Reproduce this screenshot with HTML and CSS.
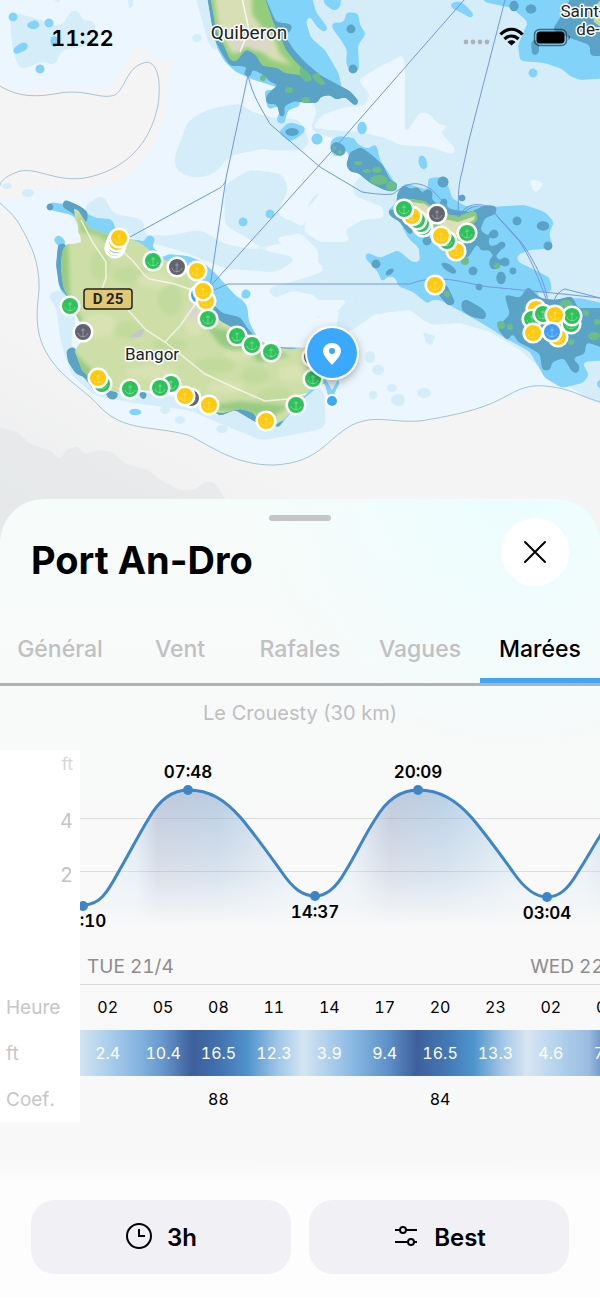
FILE: index.html
```html
<!DOCTYPE html>
<html lang="fr">
<head>
  <meta charset="UTF-8">
  <meta name="viewport" content="width=device-width, initial-scale=1.0">
  <title>Port An-Dro</title>
  <link rel="stylesheet" href="styles.css">
</head>
<body>
  <div class="map">
    <svg class="map_canvas" viewBox="0 0 600 540" role="img" aria-label="Port An-Dro">
      <defs>
        <linearGradient id="deep" x1="0" y1="1" x2="1" y2="0">
          <stop offset="0" stop-color="#ebecee"/>
          <stop offset=".35" stop-color="#f4f4f4"/>
          <stop offset="1" stop-color="#f4f4f4"/>
        </linearGradient>
        <filter id="soft" x="-20%" y="-20%" width="140%" height="140%"><feGaussianBlur stdDeviation="2"/></filter>
        <!-- rounds the corners of the coastlines -->
        <filter id="round" filterUnits="userSpaceOnUse" x="-20" y="-20" width="640" height="580" color-interpolation-filters="sRGB">
          <feGaussianBlur stdDeviation="2"/>
          <feColorMatrix values="1 0 0 0 0  0 1 0 0 0  0 0 1 0 0  0 0 0 7 -3"/>
        </filter>
        <filter id="round_big" filterUnits="userSpaceOnUse" x="-20" y="-20" width="640" height="580" color-interpolation-filters="sRGB">
          <feGaussianBlur stdDeviation="4"/>
          <feColorMatrix values="1 0 0 0 0  0 1 0 0 0  0 0 1 0 0  0 0 0 12 -5"/>
        </filter>
        <filter id="shadow" x="-50%" y="-50%" width="200%" height="200%"><feDropShadow dx="0" dy="3" stdDeviation="4" flood-opacity=".3"/></filter>
        <g id="spot">
          <circle r="9.300" stroke="#fff" stroke-width="2.600"/>
          <path d="M0-4V5M-2-2H2M-5 1C-4 6 4 6 5 1" fill="none" stroke="#fff" stroke-opacity=".3"/>
        </g>
        <clipPath id="island">
          <path d="M74 209Q78 209 80 213L85 221Q88 228 92 229L98 231L110 235Q120 234 127 237L142 244Q148 249 154 254Q162 260 168 261Q178 262 186 265Q196 272 202 281Q209 290 210 296L213 311Q216 318 222 322L239 331Q250 334 261 341Q270 346 278 348L293 349L311 347L321 343L324 363Q324 371 320 377Q316 385 310 390L299 402Q292 412 285 418Q277 425 270 425Q264 426 260 422L253 413Q247 410 240 409L223 413L212 412Q203 408 196 403Q188 396 182 395L164 393L143 390L115 392Q108 390 103 388L96 383Q88 377 82 370L75 352Q76 346 83 341L80 322Q74 312 71 300Q64 292 63 284Q60 268 62 254Q63 247 68 244Q76 244 81 242Q81 236 78 232Q79 225 75 219Z"/>
        </clipPath>
      </defs>

      <rect width="600" height="540" fill="#ebf6fe"/>

      <!-- deep water -->
      <path d="M-10 200C8 212 13 215 18 222C28 240 40 258 39 290C37 310 34 330 46 352C62 380 84 388 100 407C125 432 150 425 188 435C210 445 235 466 275 465C320 462 325 440 352 425C376 414 390 423 420 421C450 416 470 412 490 404C510 396 520 384 545 386C570 388 580 396 600 402V540H-10Z" fill="url(#deep)"/>
      <g filter="url(#round_big)">
        <path d="M-10 78L22 90L48 90L80 87L108 91L124 70L133 50L145 45L150 60L175 62L166 85L165 115L153 145L135 170L118 182L70 191L40 187L18 200L-10 196Z" fill="#f4f4f4"/>
      </g>
      <path filter="url(#round)" d="M-10 425L18 432L30 444L50 450L60 460L66 450L78 446L84 454L100 450L112 452L126 464L148 470L160 480L180 490L195 490L204 482L214 482L226 500L240 540H-10Z" fill="#e2e5e7" opacity=".55"/>

      <!-- medium water -->
      <g fill="#d5edf9" filter="url(#round_big)">
        <path d="M286-10H610V407L560 388L530 370L505 350L470 332L440 328L420 318L395 322L378 311L366 320L352 330L335 336L340 310L357 292L345 298L327 316L300 320L282 300L262 290L300 280L330 270L300 250L310 200L330 185L350 190L375 160L340 140L310 130L318 110L290 60Z"/>
        <path d="M10 12L40 20L62 28L70 12L80 8V22L97 20L90 45L60 50L55 68L45 60L20 70L13 50Z"/>
        <path d="M186 125C200 108 225 106 245 104C244 125 268 138 268 146C250 154 225 150 222 166C208 180 190 180 177 170C170 155 184 142 186 125Z"/>
        <path d="M194-10L209 44L222 62L214 30L205-10Z"/>
        <path d="M225 185L250 170L282 174L288 190L275 215L300 225L300 240L262 246L225 225Z"/>
        <path d="M82 208L103 194L112 214L145 220L142 235L170 236L200 230L226 245L300 258L275 272L225 268L180 250L110 232Z"/>
        <path d="M52 232L62 290L45 294L56 305L62 345L72 375L95 395L130 402L190 410L225 425L262 440L305 432L325 428L324 390L310 385L285 410L220 405L100 385L70 345L75 320L55 270Z"/>
        <path d="M246 110L270 118L300 120L310 145L300 150L268 150L250 130Z"/>
      </g>
      <g fill="#d5edf9">
        <ellipse cx="28" cy="193" rx="6" ry="4"/><ellipse cx="7" cy="186" rx="5" ry="3"/><ellipse cx="197" cy="38" rx="5" ry="4"/><path d="M128-2h5v8l-4 3zM52-2h10l-4 5z"/>
      </g>

      <!-- pale holes -->
      <g fill="#ebf6fe" filter="url(#round)">
        <path d="M358 80L382 65L390 62L403 54L405 66V135L420 112L430 114L438 124L450 126L440 132L455 148L454 155L430 147L400 145L385 138L360 132L330 130L312 128L322 115L345 107L364 106L370 95Z"/>
        <path d="M300 190L325 183L352 184L355 196L383 207L384 218L362 220L345 230L350 242L320 242L304 232L306 210L323 190L300 198Z"/>
        <path d="M268 301L292 291L315 295L318 320L300 325L272 310Z"/>
        <path d="M275 238L300 233L318 250L318 270L300 260Z"/>
        <path d="M357 290L325 325L312 300L345 300Z"/>
        <path d="M382 313L410 310L430 325L460 323L490 332L520 350L550 378L600 402L545 386L500 400L450 416L380 420L350 400L368 330Z"/>
        <path d="M528 178L545 183L535 194Z"/>
      </g>
      <g fill="#d5edf9">
        <ellipse cx="370" cy="357" rx="5" ry="6"/><ellipse cx="378" cy="370" rx="6" ry="5"/><ellipse cx="392" cy="388" rx="5" ry="4"/>
        <ellipse cx="398" cy="400" rx="7" ry="6"/><ellipse cx="373" cy="395" rx="4" ry="4"/><ellipse cx="424" cy="393" rx="7" ry="5"/><path d="M423 332l12 4-3 9-6-2z"/>
        <ellipse cx="165" cy="410" rx="5" ry="4"/><ellipse cx="180" cy="420" rx="5" ry="4"/><ellipse cx="222" cy="429" rx="6" ry="4"/>
      </g>

      <!-- shallow water -->
      <g fill="#82d3fa" filter="url(#round)">
        <circle cx="13" cy="17" r="5"/><circle cx="49" cy="23" r="5"/><circle cx="40" cy="69" r="5"/>
        <path d="M24 25L36 19L41 26L33 30ZM12 50L20 43L28 42L28 49L15 55ZM50 36h8v11h-7z"/>
        <path d="M206-10L217 48L225 62L236 72L254 80L280 88L300 70L240-10Z"/>
        <path d="M255-10H310L316 12L328 28L325 33L317 27L309 15L306 22L311 38L325 50L338 72L342 88L320 90L290 70Z"/>
        <path d="M323-10H342L340 8L334 11L324 4ZM345 20L346 12L358 13L360 25L366 34L358 45L359 70L352 74L346 64L347 50L341 40L332 28V22L341 23Z"/>
        <path d="M264 90L268 110L278 106L283 110L277 116L277 123L284 124L288 110L300 106L300 90ZM278 132L290 122L306 127L299 137L289 142Z"/>
        <path d="M450 3L460 1L466 6L474 14L472 19L462 13L451 8Z"/>
        <path d="M480-10H610V78L580 80L570 76L562 69L545 63L520 61L518 45L528 22L512 8L484 2Z"/>
        <circle cx="533" cy="73" r="5"/><ellipse cx="362" cy="128" rx="5" ry="7"/><circle cx="317" cy="139" r="6"/><circle cx="301" cy="130" r="4"/>
        <path d="M331 140L338 136L355 138L357 144L368 149L376 143L380 160L392 178L398 190L388 192L350 158L345 148L336 158L330 150Z"/>
        <path d="M420 153L426 158L428 168L422 170L418 163Z"/>
        <path d="M398 193L405 183L428 190L428 178L441 177L448 185L452 198L465 206L490 207L525 205L545 212L554 222L549 234L553 246L544 249L530 250L517 255L518 262L535 270L550 278L552 292L533 292L545 300L580 298L610 305V360L582 362L589 375L583 383L562 388L545 378L530 352L518 345L505 338L485 325L462 312L440 300L430 300L429 305L413 292L398 286L396 278L388 276L382 283L378 272L365 258L366 252L380 258L398 250L412 262L420 262L419 248L408 238L400 222L390 216L388 210L395 204Z"/>
        <path d="M72 215L46 209L50 202L64 204L72 202L84 212L96 218L112 219L116 230L110 238L140 240L152 246L163 258L168 254L188 256L203 262L216 274L235 295L247 305L249 322L262 346L310 348L325 352L326 380L300 402L285 420L272 420L300 370L200 310L90 235Z"/>
        <path d="M53 240L58 234L66 241L62 250ZM56 250L60 290L80 310L75 345L88 375L72 345L82 330Z"/>
        <path d="M129 409h11l3 4-3 2h-11z"/><circle cx="150" cy="240" r="5"/><circle cx="243" cy="222" r="5"/><circle cx="270" cy="214" r="5"/><circle cx="246" cy="294" r="5"/>
        <path d="M324 380L341 380L335 392L332 406L328 396Z"/>
        <path d="M597 380h13v8h-13z"/>
      </g>

      <!-- reefs -->
      <g fill="#5aa3c6" filter="url(#round)">
        <path d="M206-10L214 38L222 54L230 66L240 66L248 67L258 72L265 76L270 82L283 86L275 87L266 96L266 104L277 104L280 118L285 116L284 106L295 101L305 103L318 103L320 97L330 95L336 100L345 97L356 107L359 101L350 91L335 83L320 75L305 62L294 50L285 36L293 28L291 24L276 22L262-10Z"/>
        <circle cx="248" cy="73" r="4"/><ellipse cx="292" cy="132" rx="8" ry="4"/>
        <circle cx="351" cy="29" r="5"/><circle cx="353" cy="69" r="5"/><ellipse cx="514" cy="6" rx="5" ry="6"/><ellipse cx="531" cy="9" rx="6" ry="5"/>
        <path d="M552 30L560 18L575-10H610V56H590V45L570 38ZM531 40h8v14l-7 2z"/>
        <path d="M330 146L336 141L345 146L346 153L340 157L331 151ZM346 165L350 152L361 147L372 155L383 165L390 180L398 183L395 192L384 190L370 183L358 173L350 172Z"/>
        <path d="M396 197L403 184L416 193L430 198L440 206L455 210L470 212L486 205L497 206L496 214L485 218L480 230L488 236L490 250L480 251L478 242L468 258L450 258L440 240L420 218L400 205Z"/>
        <path d="M387 209l12 1 15 22-4 4-10-14-10-6z"/>
        <ellipse cx="443" cy="182" rx="6" ry="6"/><circle cx="416" cy="192" r="5"/><circle cx="428" cy="194" r="5"/><circle cx="444" cy="202" r="4"/><circle cx="462" cy="198" r="4"/>
        <circle cx="517" cy="221" r="5"/><ellipse cx="543" cy="226" rx="7" ry="5"/><circle cx="548" cy="246" r="5"/><circle cx="494" cy="234" r="5"/><circle cx="495" cy="250" r="5"/><ellipse cx="502" cy="245" rx="4" ry="4"/><ellipse cx="494" cy="263" rx="5" ry="7"/><circle cx="505" cy="262" r="5"/><circle cx="513" cy="271" r="4"/><ellipse cx="501" cy="278" rx="5" ry="7"/><circle cx="473" cy="271" r="5"/>
        <path d="M438 261L450 264L458 272L455 275L445 270ZM384 275L388 269L397 267L392 274L386 277ZM438 281L447 285L456 304L448 306L438 294ZM461 302L466 299L480 307L486 312V320L472 317L462 311Z"/>
        <circle cx="376" cy="264" r="5"/><circle cx="427" cy="241" r="5"/><circle cx="479" cy="287" r="4"/>
        <path d="M504 294L520 298L528 286L540 298L555 300L572 296L578 308L610 308V350L586 342L585 354L572 358L580 366L578 374L572 372L564 358L552 362L550 371L542 370L540 354L530 348L518 342L512 332L508 342L497 328L510 314Z"/>
        <path d="M74 214L62 207L64 199L80 206L88 212L87 223L78 223Z"/><circle cx="50" cy="207" r="4"/>
        <path d="M58 244L66 243L70 300L59 286L56 265ZM68 292l10 12v12l-10-8zM66 350L74 346L82 362L94 377L106 393L95 392L84 377L76 374L68 362ZM105 390L119 392L116 400L108 399ZM137 392L144 402L148 392ZM212 410L235 402L255 408L272 427L298 408L278 428L262 426L235 410L220 416Z"/>
        <path d="M205 296L222 313L240 317L249 330L264 346L300 349V358L260 352L235 336L213 320Z"/>
      </g>

      <!-- Belle-Ile -->
      <g clip-path="url(#island)">
        <rect x="50" y="200" width="290" height="230" fill="#cddfa7"/>
        <g filter="url(#soft)">
          <path d="M58 245L68 240L70 295L82 320L72 350L92 370L105 388L85 385L50 330ZM205 325L240 333L290 356L260 362L220 345ZM196 407L240 401L290 406L270 418Z" fill="#98cb82"/>
          <path d="M78 215L95 228L130 240L112 246L98 236L80 232Z" fill="#a5cf88"/>
          <g fill="#c2da9c">
            <ellipse cx="130" cy="275" rx="18" ry="9"/><ellipse cx="170" cy="300" rx="12" ry="16"/><ellipse cx="215" cy="365" rx="20" ry="8"/><ellipse cx="128" cy="330" rx="14" ry="9"/><ellipse cx="255" cy="375" rx="14" ry="9"/><ellipse cx="170" cy="345" rx="18" ry="7"/><ellipse cx="100" cy="265" rx="10" ry="16"/><ellipse cx="275" cy="396" rx="18" ry="8"/>
          </g>
          <g fill="#d8e2b3">
            <ellipse cx="100" cy="325" rx="16" ry="12"/><ellipse cx="155" cy="280" rx="18" ry="8"/><ellipse cx="195" cy="320" rx="11" ry="16"/><ellipse cx="240" cy="355" rx="15" ry="5"/><ellipse cx="150" cy="372" rx="24" ry="7"/><ellipse cx="225" cy="388" rx="18" ry="7"/><ellipse cx="292" cy="373" rx="14" ry="9"/>
          </g>
          <ellipse cx="193" cy="312" rx="5" ry="9" fill="#d9d5cd"/>
        </g>
        <path d="M129 337L140 330L146 328L140 337Z" fill="#c3c6cc"/>
        <g fill="none" stroke="#f7f7ea" stroke-width="1.500" opacity=".85">
          <path d="M81 220L93 243L106 262V278L98 300M117 248C140 262 140 275 150 279L175 284L198 292M128 310L146 330L165 342L205 374L235 388L265 401L288 399L320 390M165 342L180 326L196 303"/>
        </g>
      </g>

      <!-- Quiberon and the small islands -->
      <g filter="url(#round)">
        <path d="M209-10L216 30L224 46L230 60L236 62L246 49L256 55L262 66L278 68L284 73L300 75L308 82L312 76L302 68L294 60L286 50L280 36L274 24L262-10Z" fill="#93cd7c"/>
      </g>
      <path filter="url(#soft)" d="M213-10L219 30L232 54L246 45L262 52L272 60L292 65L280 54L274 38L262 28L252 14V-10Z" fill="#d8dfb4"/>
      <path filter="url(#soft)" d="M230 37L245 28L262 33L275 50L255 50L246 46L236 54Z" fill="#dcd7c9"/>
      <path d="M242-2L249 30L240 52" fill="none" stroke="#fff" stroke-width="1.500" opacity=".8"/>
      <g fill="#6dbd88">
        <path d="M300 67l8 5 4 8-6 2-6-6zM312 76l6-4 3 6 5 6-5 1-6-4z"/>
        <ellipse cx="306" cy="100" rx="4" ry="3"/><ellipse cx="289" cy="90" rx="4" ry="3"/><circle cx="263" cy="78" r="3"/>
        <circle cx="334" cy="148" r="2"/><circle cx="340" cy="152" r="2"/><ellipse cx="358" cy="163" rx="4" ry="2"/><ellipse cx="367" cy="171" rx="4" ry="2"/><ellipse cx="377" cy="170" rx="5" ry="3"/><ellipse cx="379" cy="180" rx="9" ry="5"/><ellipse cx="391" cy="186" rx="5" ry="5"/>
        <circle cx="465" cy="261" r="4"/><circle cx="447" cy="294" r="3"/><circle cx="497" cy="266" r="3"/><circle cx="501" cy="325" r="4"/><circle cx="510" cy="327" r="3"/><ellipse cx="594" cy="336" rx="6" ry="4"/><ellipse cx="566" cy="304" rx="6" ry="4"/><circle cx="586" cy="313" r="3"/><circle cx="597" cy="322" r="3"/><circle cx="571" cy="342" r="3"/>
      </g>
      <g filter="url(#round)">
        <path d="M407 198L425 201L440 213L458 216L476 210L478 220L468 228L464 244L450 248L438 230L425 224L410 210Z" fill="#8bc982"/>
      </g>
      <path d="M412 202L425 204L444 219L458 222L475 216L474 220L460 228L455 238L440 225L425 220Z" fill="#e0deb9"/>
      <path d="M592 10L602-2V28L594 22Z" fill="#c6dc95"/>

      <!-- depth contours -->
      <g fill="none" stroke="#8fb8c6" stroke-width=".8">
        <path d="M0 86C20 98 38 97 60 93C88 89 100 100 115 95C127 87 126 65 148 62C161 66 160 90 158 105C150 145 125 170 85 178C55 182 40 168 20 171C5 176 0 182 0 186"/>
        <path d="M0 203C8 210 13 215 18 222C28 240 40 258 39 290C37 310 34 330 46 352C62 380 84 388 100 407C125 432 150 425 188 435C210 445 235 466 275 465C320 462 325 440 352 425C376 414 390 423 420 421C450 416 470 412 490 404C510 396 520 384 545 386C570 388 580 396 600 402"/>
      </g>

      <!-- ferry lines -->
      <g fill="none" stroke="#7198dc" stroke-width="1">
        <path d="M248 75L226 178L210 287M248 75C252 95 262 110 270 124L320 167L362 192C375 194 385 195 393 194C410 180 420 182 432 190L455 215M226 180C223 187 220 188 216 190L130 237"/>
        <path d="M464 0L331 152L207 290M505 0L469 140L462 172C457 190 459 200 458 217M207 293L228 284H410C440 272 470 285 490 287L563 294L600 298"/>
        <path d="M459 217C465 203 480 202 490 208L522 243C540 270 545 285 549 306M459 217C475 200 485 206 495 214L520 242C535 265 542 290 549 306M553 304C555 296 560 290 565 289L600 298"/>
      </g>

      <g class="map_labels">
        <text class="town" x="249" y="39">Quiberon</text>
        <text x="152" y="360">Bangor</text>
        <text x="582" y="17">Saint-</text>
        <text x="588" y="35">de-</text>
      </g>
      <rect x="84" y="289" width="48" height="20" rx="3" fill="#e0c877" stroke="#222" stroke-width="1.500"/>
      <text class="road" x="108" y="304">D 25</text>

      <!-- anchorages -->
      <g class="yellow"><use href="#spot" x="115" y="248"/></g>
      <g class="blue"><use href="#spot" x="116" y="245"/><use href="#spot" x="199" y="295"/></g>
      <g class="yellow"><use href="#spot" x="117" y="242"/><use href="#spot" x="119" y="238"/><use href="#spot" x="197" y="271"/><use href="#spot" x="206" y="301"/><use href="#spot" x="203" y="291"/><use href="#spot" x="266" y="421"/></g>
      <g class="gray"><use href="#spot" x="177" y="267"/><use href="#spot" x="83" y="332"/><use href="#spot" x="191" y="398"/><use href="#spot" x="312" y="357"/></g>
      <g class="green"><use href="#spot" x="153" y="261"/><use href="#spot" x="208" y="319"/><use href="#spot" x="237" y="336"/><use href="#spot" x="252" y="345"/><use href="#spot" x="271" y="352"/><use href="#spot" x="70" y="306"/><use href="#spot" x="102" y="384"/><use href="#spot" x="130" y="389"/><use href="#spot" x="171" y="384"/><use href="#spot" x="160" y="388"/><use href="#spot" x="296" y="405"/><use href="#spot" x="313" y="379"/></g>
      <g class="yellow"><use href="#spot" x="98" y="378"/><use href="#spot" x="185" y="396"/><use href="#spot" x="209" y="405"/><use href="#spot" x="435" y="285"/><use href="#spot" x="456" y="251"/></g>
      <g class="green"><use href="#spot" x="423" y="227"/><use href="#spot" x="421" y="224"/><use href="#spot" x="417" y="220"/></g>
      <g class="yellow"><use href="#spot" x="412" y="216"/></g>
      <g class="green"><use href="#spot" x="404" y="209"/><use href="#spot" x="447" y="241"/><use href="#spot" x="467" y="233"/></g>
      <g class="yellow"><use href="#spot" x="441" y="236"/></g>
      <g class="gray"><use href="#spot" x="437" y="214"/></g>
      <g class="yellow"><use href="#spot" x="536" y="309"/><use href="#spot" x="558" y="337"/></g>
      <g class="green"><use href="#spot" x="532" y="319"/><use href="#spot" x="543" y="314"/><use href="#spot" x="571" y="324"/><use href="#spot" x="572" y="316"/></g>
      <g class="yellow"><use href="#spot" x="533" y="333"/><use href="#spot" x="555" y="315"/></g>
      <g class="blue"><use href="#spot" x="552" y="332"/></g>

      <!-- selected spot -->
      <path d="M325 378H339L332 390Z" fill="#e4eaec"/>
      <g filter="url(#shadow)"><circle cx="332" cy="353" r="27" fill="#fff"/></g>
      <circle cx="332" cy="353" r="25" fill="#3aa8fc"/>
      <path fill-rule="evenodd" d="M332 365C328 360 323 356 323 351A9 8 0 0 1 341 351C341 356 336 360 332 365ZM332 348A3 3 0 1 0 332 354A3 3 0 1 0 332 348Z" fill="#fff"/>
      <circle cx="332" cy="401" r="6" fill="#3aa8fc" stroke="#fff" stroke-width="2"/>
    </svg>

    <div class="status">
      <span class="time">11:22</span>
      <svg class="status_icons" viewBox="0 0 110 24" aria-hidden="true">
        <g fill="#a9b4ba"><circle cx="4" cy="16" r="2.400"/><circle cx="11" cy="16" r="2.400"/><circle cx="18" cy="16" r="2.400"/><circle cx="25" cy="16" r="2.400"/></g>
        <g fill="none" stroke="#000" stroke-width="3.200"><path d="M38.500 8.500C45 1.500 54 1.500 60.500 8.500"/><path d="M42.500 13C46.500 9 52.500 9 56.500 13"/></g>
        <path d="M49.500 19.500L45.500 16C47.500 13.800 51.500 13.800 53.500 16Z"/>
        <rect x="72.500" y="3.500" width="32" height="16" rx="5" fill="none" stroke="#000" stroke-opacity=".5" stroke-width="1.500"/>
        <rect x="74.500" y="5.500" width="28" height="12" rx="3.500"/>
        <path d="M106.500 9C108.500 10 108.500 13 106.500 14Z" fill-opacity=".5"/>
      </svg>
    </div>
  </div>

  <main class="sheet">
    <div class="handle"></div>
    <header class="head">
      <h1>Port An-Dro</h1>
      <button class="close" type="button" aria-label="Fermer">
        <svg viewBox="0 0 24 24" aria-hidden="true"><path d="M2 2L22 22M22 2L2 22"/></svg>
      </button>
    </header>

    <nav class="tabs">
      <a href="#general">Général</a>
      <a href="#vent">Vent</a>
      <a href="#rafales">Rafales</a>
      <a href="#vagues">Vagues</a>
      <a class="on" href="#marees" aria-current="page">Marées</a>
    </nav>

    <p class="station">Le Crouesty (30 km)</p>

    <div class="scroller">
      <div class="chart">
        <div class="axis">
          <span class="unit">ft</span>
          <span>4</span>
          <span>2</span>
        </div>
        <svg class="curve" viewBox="0 0 554 200" role="img" aria-label="Marées">
          <defs>
            <linearGradient id="tint" gradientUnits="userSpaceOnUse" x1="0" y1="0" x2="554" y2="0">
              <stop offset="0" stop-color="#d8ecfb"/>
              <stop offset=".1" stop-color="#c3def5"/>
              <stop offset=".14" stop-color="#8e9fc2"/>
              <stop offset=".25" stop-color="#83a8d0"/>
              <stop offset=".38" stop-color="#c0dcf2"/>
              <stop offset=".49" stop-color="#cde4f6"/>
              <stop offset=".56" stop-color="#8e9fc2"/>
              <stop offset=".66" stop-color="#83aed6"/>
              <stop offset=".8" stop-color="#c6e0f4"/>
              <stop offset=".91" stop-color="#cde4f6"/>
              <stop offset="1" stop-color="#8e9fc2"/>
            </linearGradient>
            <linearGradient id="fade" gradientUnits="userSpaceOnUse" x1="0" y1="40" x2="0" y2="176">
              <stop offset="0" stop-color="#fff" stop-opacity=".55"/>
              <stop offset=".6" stop-color="#fff" stop-opacity=".28"/>
              <stop offset="1" stop-color="#fff" stop-opacity="0"/>
            </linearGradient>
            <mask id="down"><rect width="554" height="200" fill="url(#fade)"/></mask>
          </defs>
          <path d="M0 68.500H554M0 121.500H554" stroke="#dcdede"/>
          <path mask="url(#down)" fill="url(#tint)" d="M3 155C20 155 27 143 39 121C50 102 58 86 69 68C80 49 93 40 108 40C130 40 145 50 161 68C176 86 188 103 201 121C213 139 223 146 235 146C247 146 256 138 265 122C277 103 284 86 296 68C308 48 322 40 338 40C360 40 376 50 392 68C408 87 420 104 433 122C444 138 455 147 467 147C478 147 487 141 498 122C506 110 514 95 520 86C532 66 542 55 554 48V176H3Z"/>
          <path class="line" d="M3 155C20 155 27 143 39 121C50 102 58 86 69 68C80 49 93 40 108 40C130 40 145 50 161 68C176 86 188 103 201 121C213 139 223 146 235 146C247 146 256 138 265 122C277 103 284 86 296 68C308 48 322 40 338 40C360 40 376 50 392 68C408 87 420 104 433 122C444 138 455 147 467 147C478 147 487 141 498 122C506 110 514 95 520 86C532 66 542 55 554 48"/>
          <g class="dots"><circle cx="3" cy="156" r="5"/><circle cx="108" cy="40" r="5"/><circle cx="235" cy="146" r="5"/><circle cx="338" cy="40" r="5"/><circle cx="467" cy="147" r="5"/></g>
          <g class="times">
            <text x="2" y="177">02:10</text>
            <text x="108" y="28">07:48</text>
            <text x="235" y="168">14:37</text>
            <text x="338" y="28">20:09</text>
            <text x="467" y="169">03:04</text>
          </g>
        </svg>
      </div>

      <table class="tides">
        <colgroup><col class="names"><col span="10"></colgroup>
        <thead>
          <tr class="days"><td></td><th colspan="8" scope="colgroup">TUE 21/4</th><th colspan="2" scope="colgroup">WED 22/4</th></tr>
        </thead>
        <tbody>
          <tr><th scope="row">Heure</th><td>02</td><td>05</td><td>08</td><td>11</td><td>14</td><td>17</td><td>20</td><td>23</td><td>02</td><td>05</td></tr>
          <tr class="heights"><th scope="row">ft</th><td>2.4</td><td>10.4</td><td>16.5</td><td>12.3</td><td>3.9</td><td>9.4</td><td>16.5</td><td>13.3</td><td>4.6</td><td>7.9</td></tr>
          <tr><th scope="row">Coef.</th><td></td><td></td><td>88</td><td></td><td></td><td></td><td>84</td><td></td><td></td><td></td></tr>
        </tbody>
      </table>
    </div>

    <footer class="actions">
      <button type="button">
        <svg viewBox="0 0 28 28" aria-hidden="true"><circle cx="14" cy="13" r="12"/><path d="M14 6V13H20"/></svg>
        3h
      </button>
      <button type="button">
        <svg viewBox="0 0 28 28" aria-hidden="true"><path d="M3 7H8M14 7H25M3 19H16M22 19H25"/><circle cx="11" cy="7" r="3"/><circle cx="19" cy="19" r="3"/></svg>
        Best
      </button>
    </footer>
  </main>
</body>
</html>
```
FILE: styles.css
```css
* {box-sizing: border-box;}

body {
  margin: 0;
  background: #fdfdfd;
  font-family: Inter, 'Liberation Sans', sans-serif;
  color: #000;
  overflow-x: hidden;
}

/* map */
.map {position: relative;}
.map_canvas {
  display: block;
  width: 100%;
}
.map_labels {
  font-family: Roboto, 'Noto Sans', sans-serif;
  font-size: 17px;
  text-anchor: middle;
  fill: #222;
  stroke: #fff;
  stroke-width: 3px;
  stroke-linejoin: round;
  paint-order: stroke;
}
.map_labels .town {font-size: 19px;}
.road {
  font-family: Roboto, 'Noto Sans', sans-serif;
  font-size: 15px;
  font-weight: 700;
  text-anchor: middle;
  fill: #222;
}
.green {fill: #2ec25b;}
.yellow {fill: #ffca0c;}
.gray {fill: #62636f;}
.blue {fill: #419ff5;}

.status {
  position: absolute;
  top: 0;
  left: 0;
  right: 0;
  display: flex;
  justify-content: space-between;
  align-items: center;
  padding: 24px 28px 0 51px;
}
.status .time {
  font-size: 22px;
  line-height: 28px;
  font-weight: 600;
  font-variant-numeric: tabular-nums;
}
.status_icons {
  width: 110px;
  height: 24px;
}

/* bottom sheet */
.sheet {
  position: relative;
  margin-top: -41px;
  padding-top: 16px;
  border-radius: 44px 44px 0 0;
  background:
    radial-gradient(circle at 85% 0, #ecfdfe 0, rgba(236, 253, 254, 0) 260px),
    linear-gradient(#f6fcfa 0, #f8f9f9 240px, #f8f8f8 660px, #fdfdfd 690px);
}
.handle {
  width: 62px;
  height: 6px;
  margin: 0 auto;
  border-radius: 3px;
  background: #c3c5c6;
}
.head {
  display: flex;
  justify-content: space-between;
  align-items: center;
  padding: 0 31px;
}
.head h1 {
  margin: 12px 0 0;
  font-size: 38px;
  line-height: 48px;
  font-weight: 700;
}
.close {
  display: flex;
  align-items: center;
  justify-content: center;
  width: 68px;
  height: 68px;
  margin-top: -3px;
  padding: 0;
  border: 0;
  border-radius: 50%;
  background: #fff;
}
.close svg {
  width: 24px;
  height: 24px;
  fill: none;
  stroke: #000;
  stroke-width: 2px;
  stroke-linecap: round;
}

.tabs {
  display: grid;
  grid-template-columns: repeat(5, 1fr);
  margin-top: 30px;
  border-bottom: 3px solid #b0b2b3;
}
.tabs a {
  padding: 17px 0 13px;
  border-bottom: 5px solid transparent;
  font-size: 23px;
  line-height: 32px;
  font-weight: 500;
  text-align: center;
  text-decoration: none;
  color: #bfc1c1;
}
.tabs a.on {
  border-color: #3fa6f7;
  color: #000;
}

.station {
  margin: 0;
  padding: 14px 0 24px;
  font-size: 20px;
  line-height: 26px;
  text-align: center;
  color: #bebfbf;
}

/* tides */
.scroller {
  overflow-x: auto;
  scrollbar-width: none;
  font-variant-numeric: tabular-nums;
}
.chart {
  display: flex;
  width: 634px;
}
.axis {
  position: sticky;
  left: 0;
  display: flex;
  flex-direction: column;
  flex: none;
  width: 80px;
  padding-right: 7px;
  background: #fff;
  font-size: 20px;
  line-height: 54px;
  text-align: right;
  color: #c4c4c4;
}
.axis .unit {
  margin-bottom: 16px;
  font-size: 17px;
  line-height: 28px;
  color: #d6d6d6;
}
.curve {
  width: 554px;
  height: 200px;
}
.curve .line {
  fill: none;
  stroke: #3d85c6;
  stroke-width: 3px;
}
.curve .dots {fill: #3d85c6;}
.curve .times {
  font-size: 17px;
  font-weight: 600;
  text-anchor: middle;
}

.tides {
  width: 634px;
  table-layout: fixed;
  border-collapse: collapse;
}
.tides .names {width: 80px;}
.tides th, .tides td {
  height: 46px;
  padding: 0;
  font-size: 16px;
  font-weight: 400;
  text-align: center;
}
.tides tbody th {
  position: sticky;
  left: 0;
  padding-left: 6px;
  background: #fff;
  font-size: 19px;
  text-align: left;
  color: #c6c6c6;
}
.tides .days th, .tides .days td {height: 34px;}
.tides .days td {background: #fff;}
.tides .days th {
  padding-left: 7px;
  border-bottom: 1px solid #d9dbdb;
  font-size: 19px;
  text-align: left;
  white-space: nowrap;
  color: #8d8d8d;
}
.tides .heights {
  background: linear-gradient(90deg,
    #d2e4f3 80px, #a9cdeb 110px, #80b1df 142px, #6797cd 163px, #3d5f9b 193px,
    #4273b1 220px, #5094cd 248px, #a0c6e7 278px, #d3e5f3 303px,
    #86b7e2 355px, #5f90c9 388px, #3e609c 417px, #4376b3 445px, #5095ce 474px,
    #a3c6e6 502px, #d8e6f3 527px, #abcdea 565px, #9cbce0 588px, #6288c0 606px);
}
.tides .heights td {color: #fff;}

/* actions */
.actions {
  display: grid;
  grid-template-columns: 1fr 1fr;
  gap: 18px;
  padding: 78px 31px 25px;
}
.actions button {
  display: flex;
  align-items: center;
  justify-content: center;
  gap: 14px;
  height: 74px;
  padding: 0;
  border: 0;
  border-radius: 24px;
  background: #f1f0f5;
  font-family: inherit;
  font-size: 24px;
  font-weight: 600;
  color: #000;
}
.actions svg {
  width: 28px;
  height: 28px;
  fill: none;
  stroke: #000;
  stroke-width: 2px;
}
```
